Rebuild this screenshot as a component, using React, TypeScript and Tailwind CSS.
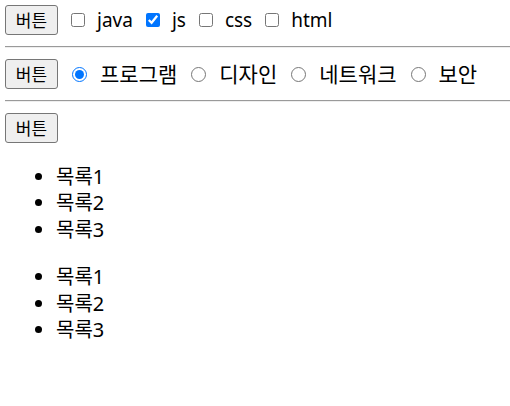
import React from "react";

function Btn() {
  return (
    <button className="h-[30px] w-[53px] shrink-0 rounded-[3px] border border-[#767676] bg-[#efefef] text-[17px] leading-none text-black">
      버튼
    </button>
  );
}

function Rule() {
  return <hr className="my-[11px] border-t border-b border-t-[#9a9a9a] border-b-[#eeeeee]" />;
}

const langs = [
  { name: "java", checked: false },
  { name: "js", checked: true },
  { name: "css", checked: false },
  { name: "html", checked: false },
];

const fields = ["프로그램", "디자인", "네트워크", "보안"];

export default function App() {
  return (
    <div className="min-h-[406px] bg-white pl-[5px] pt-[5px] text-[19px] leading-[26px] text-black font-['Noto_Sans','Noto_Sans_CJK_KR',sans-serif]">
      {/* checkboxes */}
      <div className="flex h-[30px] items-center">
        <Btn />
        {langs.map((l) => (
          <label key={l.name} className="ml-[13px] flex items-center">
            <input
              type="checkbox"
              defaultChecked={l.checked}
              className="m-0 h-[14px] w-[14px]"
            />
            <span className="ml-[12px]">{l.name}</span>
          </label>
        ))}
      </div>

      <Rule />

      {/* radios */}
      <div className="flex h-[30px] items-center">
        <Btn />
        {fields.map((f, i) => (
          <label key={f} className="ml-[14px] flex items-center">
            <input
              type="radio"
              name="field"
              defaultChecked={i === 0}
              className="m-0 h-[15px] w-[15px]"
            />
            <span className="ml-[13px] text-[21px]">{f}</span>
          </label>
        ))}
      </div>

      <Rule />

      <div className="flex h-[30px] items-center">
        <Btn />
      </div>

      <ul className="my-[21px] list-disc pl-[51px] text-[20px] leading-[26.4px]">
        <li>목록1</li>
        <li>목록2</li>
        <li>목록3</li>
      </ul>
      <ul className="my-[21px] list-disc pl-[51px] text-[20px] leading-[26.4px]">
        <li>목록1</li>
        <li>목록2</li>
        <li>목록3</li>
      </ul>
    </div>
  );
}
